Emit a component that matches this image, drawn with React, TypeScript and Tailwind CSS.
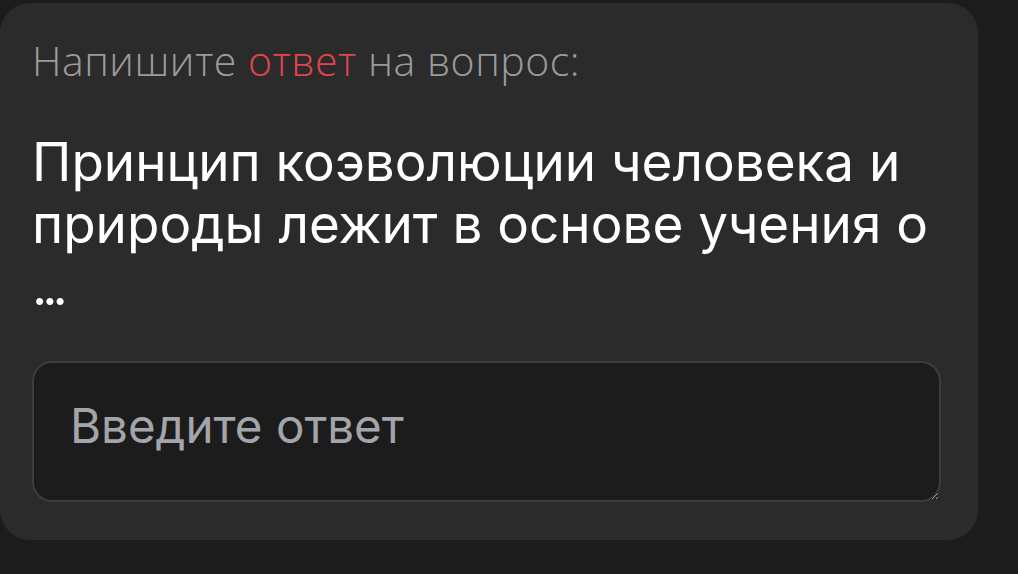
export default function App() {
  return (
    <div className="h-[574px] w-[1018px] overflow-hidden bg-[#1c1c1c]">
      <div className="mt-[3px] flex h-[537px] w-[978px] flex-col rounded-[30px] bg-[#2b2b2b] pl-[32px] pr-[37px] pt-[35px]">
        <p className="font-['Open_Sans',sans-serif] text-[41px] font-light leading-[44px] tracking-[0.5px] text-[#9b9b9b]">
          Напишите <span className="text-[#e2454d]">ответ</span> на вопрос:
        </p>
        <p className="mt-[49px] font-['Inter',sans-serif] text-[53px] leading-[62px] text-white">
          Принцип коэволюции человека и природы лежит в основе учения о <span className="tracking-[-5px]">...</span>
        </p>
        <textarea
          placeholder="Введите ответ"
          className="mt-[44px] h-[141px] w-full shrink-0 rounded-[20px] border-2 border-[#3d3d3d] bg-[#1c1c1c] px-[36px] py-[37px] font-['Inter',sans-serif] text-[47.5px] leading-[52px] text-white outline-none placeholder:text-[#a2a5aa]"
        />
      </div>
    </div>
  );
}
